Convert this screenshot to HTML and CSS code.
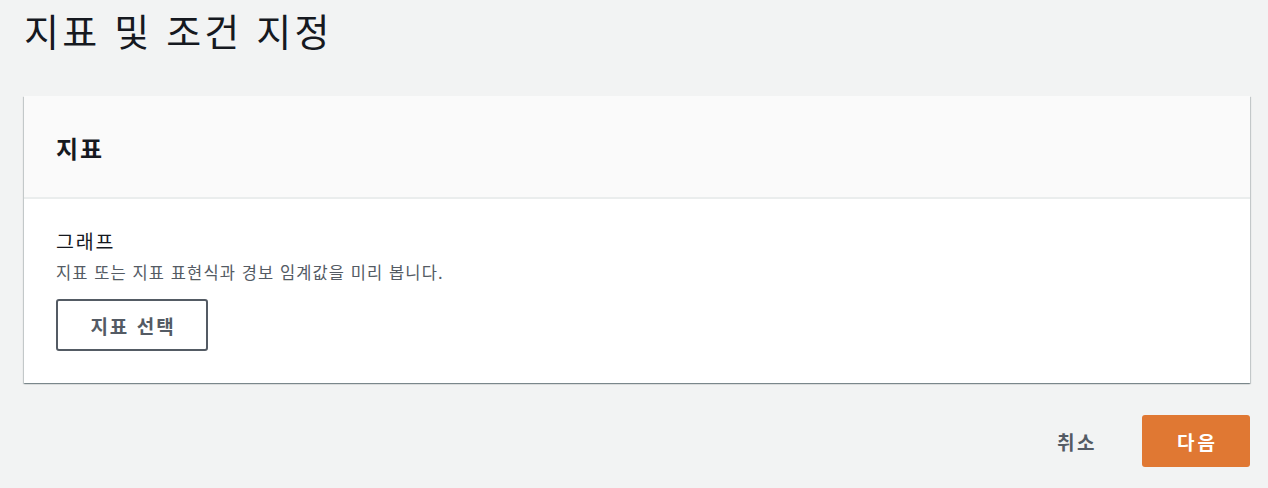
FILE: index.html
```html
<!DOCTYPE html>
<html lang="ko">
<head>
<meta charset="utf-8">
<link rel="stylesheet" href="styles.css">
</head>
<body>
<div class="page">
  <h1 class="title">지표 및 조건 지정</h1>
  <section class="card">
    <div class="card-header"><h2>지표</h2></div>
    <div class="card-body">
      <div class="label">그래프</div>
      <div class="desc">지표 또는 지표 표현식과 경보 임계값을 미리 봅니다.</div>
      <button class="btn-normal">지표 선택</button>
    </div>
  </section>
  <div class="actions">
    <button class="btn-link">취소</button>
    <button class="btn-primary">다음</button>
  </div>
</div>
</body>
</html>
```
FILE: styles.css
```css
html, body {
  margin: 0;
  padding: 0;
  background: #f2f3f3;
}
body {
  font-family: "Noto Sans CJK KR", "Noto Sans", sans-serif;
  color: #16191f;
}
.page {
  padding: 0 18px 0 24px;
}
.title {
  margin: 0;
  padding-top: 7px;
  height: 89px;
  font-size: 38px;
  font-weight: 400;
  line-height: 46px;
  color: #16191f;
  letter-spacing: 3.2px;
}
.card {
  background: #fff;
  box-shadow: 0 1px 1px 0 rgba(0,28,36,.3), 1px 1px 1px 0 rgba(0,28,36,.15), -1px 1px 1px 0 rgba(0,28,36,.15);
  width: 1226px;
}
.card-header {
  background: #fafafa;
  border-bottom: 2px solid #eaeded;
  height: 101px;
  display: flex;
  align-items: center;
  padding: 0 32px;
}
.card-header h2 {
  margin: 0;
  font-size: 24px;
  font-weight: 700;
  line-height: 30px;
  padding-top: 2px;
  letter-spacing: 2px;
}
.card-body {
  padding: 29px 32px 32px;
}
.label {
  font-size: 19.5px;
  line-height: 26px;
  color: #16191f;
  letter-spacing: 1.8px;
}
.desc {
  font-size: 16.5px;
  line-height: 24px;
  color: #545b64;
  margin-top: 6px;
  letter-spacing: 1.1px;
}
.btn-normal {
  margin-top: 15px;
  width: 152px;
  height: 52px;
  border: 2px solid #545b64;
  border-radius: 3px;
  background: #fff;
  color: #545b64;
  font-family: inherit;
  font-size: 19px;
  font-weight: 700;
  letter-spacing: 2px;
  padding: 0 0 0 2px;
  display: block;
}
.actions {
  width: 1226px;
  display: flex;
  justify-content: flex-end;
  align-items: center;
  margin-top: 32px;
  gap: 20px;
}
.btn-link {
  background: none;
  border: none;
  font-family: inherit;
  font-size: 19px;
  font-weight: 700;
  color: #545b64;
  letter-spacing: 2.5px;
  padding: 0 25px 0 26px;
  height: 52px;
}
.btn-primary {
  width: 108px;
  height: 52px;
  border: none;
  border-radius: 3px;
  background: #e07833;
  color: #fff;
  font-family: inherit;
  font-size: 19px;
  font-weight: 700;
  letter-spacing: 3px;
  padding: 0 0 0 3px;
}
```
